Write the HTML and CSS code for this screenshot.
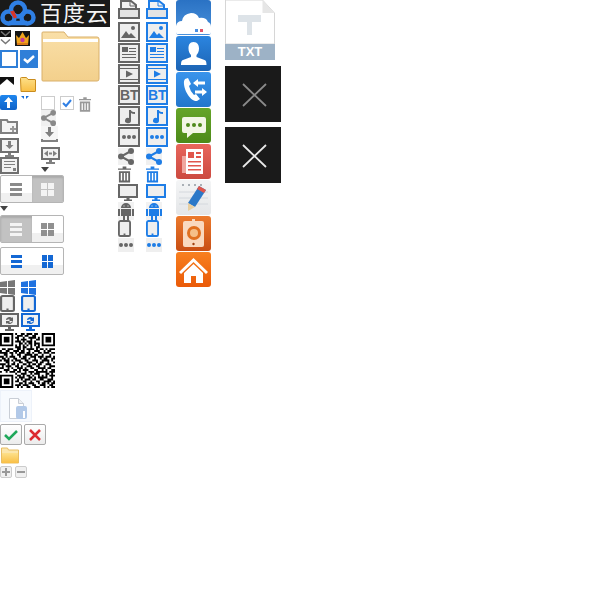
FILE: index.html
```html
<!DOCTYPE html>
<html lang="zh-CN">
<head>
    <meta charset="UTF-8">
    <title>百度云 sprite</title>
    <link rel="stylesheet" href="styles.css">
</head>
<body>
    <svg class="defs" width="0" height="0">
        <defs>
            <linearGradient id="folder-big" x1="0" y1="0" x2="0" y2="1">
                <stop offset="0" stop-color="#f9dfa8"/><stop offset="1" stop-color="#f3d08c"/>
            </linearGradient>
            <linearGradient id="folder-small" x1="0" y1="0" x2="0" y2="1">
                <stop offset="0" stop-color="#fde08a"/><stop offset="1" stop-color="#f9bf45"/>
            </linearGradient>
            <symbol id="i-page" viewBox="0 0 22 19">
                <path d="M3 9V1h10l5 4v4" fill="#f2f2f2" stroke="currentColor" stroke-width="2"/>
                <path d="M12 1v5h6" fill="none" stroke="currentColor"/>
                <rect x="1" y="9" width="20" height="9" fill="#e4e4e4" stroke="currentColor" stroke-width="2"/>
            </symbol>
            <symbol id="i-image" viewBox="0 0 22 20">
                <rect x="1" y="1" width="20" height="18" fill="#eee" stroke="currentColor" stroke-width="2"/>
                <path d="M3 16l5-7 3 4 2-2 5 5z" fill="currentColor"/>
                <circle cx="15" cy="6" r="2" fill="currentColor"/>
            </symbol>
            <symbol id="i-doc" viewBox="0 0 22 20">
                <rect x="1" y="1" width="20" height="18" fill="#eee" stroke="currentColor" stroke-width="2"/>
                <path d="M4 4h6v5H4zM11 5h7v1h-7zM11 8h7v1h-7zM4 11h14v1H4zM4 14h14v1H4z" fill="currentColor"/>
            </symbol>
            <symbol id="i-film" viewBox="0 0 22 20">
                <rect x="1" y="1" width="20" height="18" fill="#eee" stroke="currentColor" stroke-width="2"/>
                <path d="M1 4h20v1H1zM1 15h20v1H1zM8 6.500v7l7-3.500z" fill="currentColor"/>
                <path d="M4 2.500h14M4 17.500h14" stroke="#eee" stroke-dasharray="2 2"/>
            </symbol>
            <symbol id="i-note" viewBox="0 0 22 20">
                <rect x="1" y="1" width="20" height="18" fill="#eee" stroke="currentColor" stroke-width="2"/>
                <path d="M11 4h2v10.500a3 2.600 0 1 1-2-2.400zM13 4q0 2 4 2v2q-3 0-4-1z" fill="currentColor"/>
            </symbol>
            <symbol id="i-more" viewBox="0 0 22 20">
                <rect x="1" y="1" width="20" height="18" fill="#eee" stroke="currentColor" stroke-width="2"/>
                <circle cx="6" cy="10" r="2" fill="currentColor"/>
                <circle cx="11" cy="10" r="2" fill="currentColor"/>
                <circle cx="16" cy="10" r="2" fill="currentColor"/>
            </symbol>
            <symbol id="i-share" viewBox="0 0 16 17">
                <rect width="16" height="17" fill="#f0f0f0"/>
                <path d="M13 3L3 8.500 13 14" fill="none" stroke="currentColor" stroke-width="2"/>
                <circle cx="13" cy="3" r="3" fill="currentColor"/>
                <circle cx="3" cy="8.500" r="3" fill="currentColor"/>
                <circle cx="13" cy="14" r="3" fill="currentColor"/>
            </symbol>
            <symbol id="i-trash" viewBox="0 0 14 17">
                <path d="M0 2h5V0h4v2h5v1.500H0zM1 5h12v12H1zM3 7v8h1.500V7zM6.300 7v8h1.500V7zM9.500 7v8H11V7z" fill="currentColor" fill-rule="evenodd"/>
            </symbol>
            <symbol id="i-monitor" viewBox="0 0 20 18">
                <rect x="1" y="1" width="18" height="12" fill="#eee" stroke="currentColor" stroke-width="2"/>
                <path d="M8.500 14h3v1.500H14V17H6v-1.500h2.500z" fill="currentColor"/>
            </symbol>
            <symbol id="i-android" viewBox="0 0 16 18">
                <rect width="16" height="18" fill="#f2f2f2"/>
                <path d="M3 6a5 5 0 0 1 10 0zM3 7h10v7h-2v4H9v-4H7v4H5v-4H3zM0 7h2v7H0zM14 7h2v7h-2z" fill="currentColor"/>
                <path d="M5.500 3.500h1v1h-1zM9.500 3.500h1v1h-1z" fill="#eee"/>
            </symbol>
            <symbol id="i-tablet" viewBox="0 0 14 17" preserveAspectRatio="none">
                <rect x="1" y="1" width="12" height="15" rx="1.500" fill="#eee" stroke="currentColor" stroke-width="2"/>
                <rect x="6" y="13.500" width="2" height="1.500" fill="currentColor"/>
            </symbol>
            <symbol id="i-dots" viewBox="0 0 16 14">
                <rect width="16" height="14" fill="#efefef"/>
                <circle cx="3" cy="7" r="2" fill="currentColor"/>
                <circle cx="8" cy="7" r="2" fill="currentColor"/>
                <circle cx="13" cy="7" r="2" fill="currentColor"/>
            </symbol>
            <symbol id="i-sync" viewBox="0 0 19 18">
                <rect x="1" y="1" width="17" height="12" fill="#f2f2f2" stroke="currentColor" stroke-width="2"/>
                <path d="M6 7a3.500 3 0 0 1 6-2l1-1v4h-4l1-1a2 2 0 0 0-3 0zM13 8a3.500 3 0 0 1-6 2l-1 1V8h4l-1 1a2 2 0 0 0 3-.500z" fill="currentColor"/>
                <path d="M8 14h3v2h3v2H5v-2h3z" fill="currentColor"/>
            </symbol>
        </defs>
    </svg>

    <div class="sheet">
        <!-- 左列 -->
        <div class="sprite logo">
            <svg width="36" height="27" viewBox="0 0 36 27">
                <g fill="none" stroke="#2f7fe4" stroke-width="4.500">
                    <circle cx="8.500" cy="17.500" r="6"/>
                    <circle cx="27.500" cy="17.500" r="6"/>
                    <circle cx="18" cy="9.500" r="7"/>
                    <path d="M9 23h18"/>
                </g>
                <path d="M10 11.500l4-1 3 7-3 1z" fill="#d8362a"/>
            </svg>
            <span class="logo-text">百度云</span>
        </div>

        <div class="sprite chevrons">
            <svg width="11" height="15" viewBox="0 0 11 15">
                <path d="M0 0h11v7H0z" fill="#111"/>
                <path d="M1 1.500l4.500 4 4.500-4" fill="none" stroke="#777" stroke-width="1.500"/>
                <path d="M1 9.500l4.500 4 4.500-4" fill="none" stroke="#777" stroke-width="1.500"/>
            </svg>
        </div>
        <div class="sprite crown">
            <svg width="15" height="15" viewBox="0 0 15 15">
                <path d="M0 0h15v15H0z" fill="#151515"/>
                <path d="M1 4l3 3 3.500-6L11 7l3-3-1 10H2z" fill="#f0a41c"/>
                <path d="M2 12h11v2H2z" fill="#d9791a"/>
                <circle cx="7.500" cy="9" r="2.200" fill="#c2389a"/>
            </svg>
        </div>

        <div class="sprite check-off"></div>
        <div class="sprite check-on">
            <svg width="18" height="18" viewBox="0 0 18 18"><path d="M4 9l3.500 3L14 6" fill="none" stroke="#fff" stroke-width="2.500"/></svg>
        </div>

        <div class="sprite folder-big">
            <svg width="59" height="51" viewBox="0 0 59 51">
                <path d="M1 6V2q0-1 1-1h21l4 5h29q2 0 2 2v40q0 2-2 2H2q-1 0-1-1z" fill="url(#folder-big)" stroke="#d9b06a"/>
                <path d="M2 8h55v3H2z" fill="#fff"/>
            </svg>
        </div>

        <div class="sprite tri-up">
            <svg width="14" height="8" viewBox="0 0 14 8"><path d="M0 0h14v8H0z" fill="#111"/><path d="M0 8l7-6 7 6z" fill="#fff"/></svg>
        </div>
        <div class="sprite folder-small">
            <svg width="16" height="15" viewBox="0 0 16 15">
                <path d="M.5 1.500q0-1 1-1h5l1.500 2h7q.5 0 .5.500v11q0 .500-.5.500h-14z" fill="url(#folder-small)" stroke="#c98c1e"/>
            </svg>
        </div>

        <div class="sprite upload">
            <svg width="17" height="15" viewBox="0 0 17 15"><path d="M8.500 2L13 7h-3v6H7V7H4z" fill="#fff"/></svg>
        </div>
        <div class="sprite mini-chevrons">
            <svg width="8" height="5" viewBox="0 0 8 5"><path d="M0 0h3v3zM8 0H5v3z" fill="#1a6fd8"/></svg>
        </div>

        <div class="sprite box-off"></div>
        <div class="sprite box-on">
            <svg width="14" height="14" viewBox="0 0 14 14"><path d="M3 7l3 3 5-6" fill="none" stroke="#2f7fe4" stroke-width="2"/></svg>
        </div>
        <svg class="sprite big-trash"><use href="#i-trash"/></svg>
        <svg class="sprite big-share"><use href="#i-share"/></svg>

        <div class="sprite tool-download">
            <svg width="17" height="16" viewBox="0 0 17 16"><path d="M0 0h17v16H0z" fill="#f6f6f6"/><path d="M7 1h3v5h3l-4.500 5L4 6h3zM0 13h2v1h13v-1h2v3H0z" fill="#808080"/></svg>
        </div>
        <div class="sprite tool-arrows">
            <svg width="19" height="17" viewBox="0 0 19 17">
                <rect x="1" y="1" width="17" height="11" fill="#f2f2f2" stroke="#707070" stroke-width="2"/>
                <path d="M3 6.500L7 3.500v6zM16 6.500L12 3.500v6zM8 5.500h3v2H8z" fill="#808080"/>
                <path d="M8 13h3v2h3v2H5v-2h3z" fill="#808080"/>
            </svg>
        </div>
        <div class="sprite tool-tri"></div>

        <div class="sprite tool-folder-add">
            <svg width="18" height="16" viewBox="0 0 18 16">
                <path d="M1 15V2h6l1 2h9v11z" fill="#f4f4f4" stroke="#808080" stroke-width="2"/>
                <path d="M12 8h2v2h2v2h-2v2h-2v-2h-2v-2h2z" fill="#999"/>
            </svg>
        </div>
        <div class="sprite tool-save">
            <svg width="19" height="19" viewBox="0 0 19 19">
                <rect x="1" y="1" width="17" height="13" fill="#f2f2f2" stroke="#707070" stroke-width="2"/>
                <path d="M8 3h3v4h2.500l-4 4-4-4H8zM8 15h3v2h3v2H5v-2h3z" fill="#808080"/>
            </svg>
        </div>
        <div class="sprite tool-note">
            <svg width="19" height="17" viewBox="0 0 19 17">
                <rect x="1" y="1" width="17" height="15" fill="#f2f2f2" stroke="#707070" stroke-width="2"/>
                <path d="M4 4h11v1H4zM4 7h11v1H4zM4 10h7v1H4zM13 11h3v3h-3z" fill="#808080"/>
            </svg>
        </div>

        <div class="sprite toggle toggle-right">
            <span class="seg">
                <svg width="14" height="13" viewBox="0 0 14 13"><path d="M0 0h12v3H0zM0 5h12v3H0zM0 10h12v3H0z" fill="#8a8a8a"/></svg>
            </span>
            <span class="seg seg-on">
                <svg width="14" height="13" viewBox="0 0 14 13"><path d="M0 0h6v6H0zM7 0h6v6H7zM0 7h6v6H0zM7 7h6v6H7z" fill="#f4f4f4"/></svg>
            </span>
        </div>
        <div class="sprite tri-a"></div>
        <div class="sprite toggle toggle-left">
            <span class="seg seg-on">
                <svg width="14" height="13" viewBox="0 0 14 13"><path d="M0 0h12v3H0zM0 5h12v3H0zM0 10h12v3H0z" fill="#f4f4f4"/></svg>
            </span>
            <span class="seg">
                <svg width="14" height="13" viewBox="0 0 14 13"><path d="M0 0h6v6H0zM7 0h6v6H7zM0 7h6v6H0zM7 7h6v6H7z" fill="#909090"/></svg>
            </span>
        </div>
        <div class="sprite toggle toggle-blue">
            <span class="seg">
                <svg width="14" height="13" viewBox="0 0 14 13"><path d="M1 0h11v3H1zM1 5h11v3H1zM1 10h11v3H1z" fill="#1468d4"/></svg>
            </span>
            <span class="seg">
                <svg width="14" height="13" viewBox="0 0 14 13"><path d="M1 0h5v6H1zM7 0h5v6H7zM1 7h5v6H1zM7 7h5v6H7z" fill="#1468d4"/></svg>
            </span>
        </div>

        <div class="sprite win win-gray">
            <svg width="15" height="15" viewBox="0 0 15 15"><path d="M0 2l7-1v6H0zM8 1l7-1v7H8zM0 8h7v6l-7-1zM8 8h7v7l-7-1z" fill="currentColor"/></svg>
        </div>
        <div class="sprite win win-blue">
            <svg width="15" height="15" viewBox="0 0 15 15"><path d="M0 2l7-1v6H0zM8 1l7-1v7H8zM0 8h7v6l-7-1zM8 8h7v7l-7-1z" fill="currentColor"/></svg>
        </div>
        <svg class="sprite tab-gray"><use href="#i-tablet"/></svg>
        <svg class="sprite tab-blue"><use href="#i-tablet"/></svg>
        <svg class="sprite sync-gray"><use href="#i-sync"/></svg>
        <svg class="sprite sync-blue"><use href="#i-sync"/></svg>

        <div class="sprite qr">
            <svg width="55" height="55" viewBox="0 0 29 29">
                <path fill="none" stroke="#000" d="M0 .5h7M8 .5h1M11 .5h2M14 .5h3M18 .5h2M22 .5h7
                    M0 1.500h1M6 1.500h1M9 1.500h3M13 1.500h2M17 1.500h2M22 1.500h1M28 1.500h1
                    M0 2.500h1M2 2.500h3M6 2.500h1M8 2.500h2M12 2.500h1M15 2.500h4M20 2.500h1M22 2.500h1M24 2.500h3M28 2.500h1
                    M0 3.500h1M2 3.500h3M6 3.500h1M9 3.500h1M11 3.500h3M16 3.500h1M19 3.500h2M22 3.500h1M24 3.500h3M28 3.500h1
                    M0 4.500h1M2 4.500h3M6 4.500h1M8 4.500h3M12 4.500h1M14 4.500h3M18 4.500h1M22 4.500h1M24 4.500h3M28 4.500h1
                    M0 5.500h1M6 5.500h1M10 5.500h2M13 5.500h1M15 5.500h2M18 5.500h3M22 5.500h1M28 5.500h1
                    M0 6.500h7M8 6.500h1M10 6.500h1M12 6.500h1M14 6.500h1M16 6.500h1M18 6.500h1M20 6.500h1M22 6.500h7
                    M8 7.500h3M12 7.500h2M16 7.500h1M19 7.500h2
                    M1 8.500h2M4 8.500h3M9 8.500h2M12 8.500h1M14 8.500h4M19 8.500h1M21 8.500h2M24 8.500h1M26 8.500h3
                    M0 9.500h1M3 9.500h2M7 9.500h3M11 9.500h2M15 9.500h1M18 9.500h3M23 9.500h1M25 9.500h2
                    M0 10.500h4M5 10.500h2M8 10.500h1M10 10.500h3M14 10.500h2M17 10.500h1M20 10.500h2M23 10.500h3M27 10.500h2
                    M2 11.500h2M6 11.500h1M9 11.500h2M13 11.500h4M18 11.500h2M22 11.500h1M26 11.500h1
                    M0 12.500h2M3 12.500h1M5 12.500h3M10 12.500h1M12 12.500h2M16 12.500h3M20 12.500h3M24 12.500h3M28 12.500h1
                    M1 13.500h2M4 13.500h1M7 13.500h2M11 13.500h3M15 13.500h1M18 13.500h1M21 13.500h1M23 13.500h2M27 13.500h2
                    M0 14.500h1M2 14.500h3M6 14.500h1M8 14.500h3M13 14.500h2M17 14.500h3M22 14.500h4M27 14.500h1
                    M3 15.500h2M7 15.500h1M10 15.500h2M14 15.500h3M19 15.500h1M21 15.500h2M25 15.500h1M28 15.500h1
                    M0 16.500h3M4 16.500h1M6 16.500h2M9 16.500h1M12 16.500h2M15 16.500h1M17 16.500h2M20 16.500h2M24 16.500h3
                    M1 17.500h1M3 17.500h3M8 17.500h2M11 17.500h1M14 17.500h3M19 17.500h2M23 17.500h1M26 17.500h3
                    M0 18.500h2M4 18.500h1M6 18.500h1M9 18.500h3M13 18.500h1M16 18.500h2M20 18.500h4M25 18.500h2
                    M2 19.500h3M7 19.500h2M10 19.500h1M12 19.500h3M18 19.500h2M22 19.500h1M24 19.500h1M27 19.500h2
                    M0 20.500h1M3 20.500h1M5 20.500h3M9 20.500h2M13 20.500h1M15 20.500h3M19 20.500h6M26 20.500h3
                    M8 21.500h1M11 21.500h3M16 21.500h1M18 21.500h2M20 21.500h1M24 21.500h2M27 21.500h1
                    M0 22.500h7M9 22.500h2M12 22.500h1M14 22.500h2M17 22.500h1M20 22.500h1M22 22.500h1M24 22.500h1M26 22.500h3
                    M0 23.500h1M6 23.500h1M8 23.500h1M10 23.500h3M15 23.500h2M18 23.500h1M20 23.500h5M27 23.500h1
                    M0 24.500h1M2 24.500h3M6 24.500h1M9 24.500h1M11 24.500h1M13 24.500h3M17 24.500h2M21 24.500h2M25 24.500h3
                    M0 25.500h1M2 25.500h3M6 25.500h1M8 25.500h2M12 25.500h2M16 25.500h1M19 25.500h2M23 25.500h4M28 25.500h1
                    M0 26.500h1M2 26.500h3M6 26.500h1M10 26.500h2M13 26.500h1M15 26.500h3M20 26.500h1M22 26.500h2M25 26.500h1M27 26.500h2
                    M0 27.500h1M6 27.500h1M8 27.500h3M12 27.500h3M17 27.500h2M21 27.500h3M26 27.500h2
                    M0 28.500h7M9 28.500h1M11 28.500h1M14 28.500h2M18 28.500h3M23 28.500h1M25 28.500h1M27 28.500h2"/>
            </svg>
        </div>

        <div class="sprite file-tile">
            <svg width="32" height="32" viewBox="0 0 32 32">
                <path d="M9.500 8.500h9l5 5v15h-14z" fill="#fff" stroke="#c9ced6"/>
                <path d="M18.500 8.500v5h5" fill="#eef0f3" stroke="#c9ced6"/>
                <rect x="16" y="16" width="11" height="13" rx="2" fill="#b2c9e8"/>
                <path d="M23 21h2v7h-2z" fill="#fff"/>
            </svg>
        </div>

        <div class="sprite mini-btn btn-ok">
            <svg width="14" height="12" viewBox="0 0 14 12"><path d="M1 6l4 4 8-8" fill="none" stroke="#1fa85a" stroke-width="2.500"/></svg>
        </div>
        <div class="sprite mini-btn btn-no">
            <svg width="12" height="12" viewBox="0 0 12 12"><path d="M1 1l10 10M11 1L1 11" fill="none" stroke="#dc2a30" stroke-width="2.500"/></svg>
        </div>

        <div class="sprite folder-open">
            <svg width="18" height="17" viewBox="0 0 18 17">
                <path d="M.5 3V1h6l1 2h10v13H.5z" fill="#fbe6ac" stroke="#e8bd63"/>
                <path d="M1 6h16v10H1z" fill="url(#folder-small)"/>
            </svg>
        </div>
        <div class="sprite round-btn btn-plus">
            <svg width="8" height="8" viewBox="0 0 8 8"><path d="M3 0h2v3h3v2H5v3H3V5H0V3h3z" fill="#999"/></svg>
        </div>
        <div class="sprite round-btn btn-minus">
            <svg width="8" height="2" viewBox="0 0 8 2"><path d="M0 0h8v2H0z" fill="#999"/></svg>
        </div>

        <!-- 第二列 灰色 -->
        <div class="icon-col col-gray">
            <svg class="ic ic-page"><use href="#i-page"/></svg>
            <svg class="ic ic-box"><use href="#i-image"/></svg>
            <svg class="ic ic-box"><use href="#i-doc"/></svg>
            <svg class="ic ic-box"><use href="#i-film"/></svg>
            <span class="ic-bt">BT</span>
            <svg class="ic ic-box"><use href="#i-note"/></svg>
            <svg class="ic ic-box"><use href="#i-more"/></svg>
            <svg class="ic ic-share"><use href="#i-share"/></svg>
            <svg class="ic ic-trash"><use href="#i-trash"/></svg>
            <svg class="ic ic-monitor"><use href="#i-monitor"/></svg>
            <svg class="ic ic-android"><use href="#i-android"/></svg>
            <svg class="ic ic-tablet"><use href="#i-tablet"/></svg>
            <svg class="ic ic-dots"><use href="#i-dots"/></svg>
        </div>
        <!-- 第二列 蓝色 -->
        <div class="icon-col col-blue">
            <svg class="ic ic-page"><use href="#i-page"/></svg>
            <svg class="ic ic-box"><use href="#i-image"/></svg>
            <svg class="ic ic-box"><use href="#i-doc"/></svg>
            <svg class="ic ic-box"><use href="#i-film"/></svg>
            <span class="ic-bt">BT</span>
            <svg class="ic ic-box"><use href="#i-note"/></svg>
            <svg class="ic ic-box"><use href="#i-more"/></svg>
            <svg class="ic ic-share"><use href="#i-share"/></svg>
            <svg class="ic ic-trash"><use href="#i-trash"/></svg>
            <svg class="ic ic-monitor"><use href="#i-monitor"/></svg>
            <svg class="ic ic-android"><use href="#i-android"/></svg>
            <svg class="ic ic-tablet"><use href="#i-tablet"/></svg>
            <svg class="ic ic-dots"><use href="#i-dots"/></svg>
        </div>

        <!-- 应用图标 -->
        <div class="app-col">
            <div class="app app-cloud">
                <svg width="35" height="35" viewBox="0 0 35 35">
                    <path d="M0 34V26q1-5 6-5 1-7 9-8 6 0 8 5 7-1 9 4 3 1 3 5v7z" fill="#fff"/>
                    <path d="M19 29h3v3h-3z" fill="#4a90e2"/>
                    <path d="M24 29h3v3h-3z" fill="#e0566a"/>
                </svg>
            </div>
            <div class="app app-contact">
                <svg width="35" height="35" viewBox="0 0 35 35">
                    <path d="M17.500 6c4 0 5.500 3 5.500 6.500 0 3-1 5-2.500 6.500v2l8 3c1.500.5 2 2 2 5H5c0-3 .5-4.500 2-5l8-3v-2c-1.500-1.500-2.500-3.500-2.500-6.500C12.500 9 13.500 6 17.500 6z" fill="#fff"/>
                </svg>
            </div>
            <div class="app app-phone">
                <svg width="35" height="35" viewBox="0 0 35 35">
                    <path d="M9 7l3-1 3 6-2 2q1 5 5 9l2-1 4 5-3 2c-6 1-14-11-13-20z" fill="#fff"/>
                    <path d="M17 11l5-4v2.500h7v3h-7V15zM31 20l-5-4v2.500h-7v3h7V24z" fill="#fff"/>
                </svg>
            </div>
            <div class="app app-chat">
                <svg width="35" height="35" viewBox="0 0 35 35">
                    <path d="M8 9h20q2 0 2 2v12q0 2-2 2H17l-6 5v-5H8q-2 0-2-2V11q0-2 2-2z" fill="#f2f6e6"/>
                    <circle cx="12" cy="17" r="2" fill="#4f8a1c"/>
                    <circle cx="18" cy="17" r="2" fill="#4f8a1c"/>
                    <circle cx="24" cy="17" r="2" fill="#4f8a1c"/>
                </svg>
            </div>
            <div class="app app-news">
                <svg width="35" height="35" viewBox="0 0 35 35">
                    <path d="M6 12h4v17H6z" fill="#f0a79f"/>
                    <path d="M10 5h17v25H10z" fill="#fff"/>
                    <path d="M12 8h6v6h-6zM20 8h5v2h-5zM20 12h5v2h-5zM12 17h13v1.500H12zM12 21h13v1.500H12zM12 25h13v1.500H12z" fill="#e0564c"/>
                </svg>
            </div>
            <div class="app app-pencil">
                <svg width="35" height="35" viewBox="0 0 35 35">
                    <path d="M3 12h29M3 18h29M3 24h29" stroke="#d4d8dd"/>
                    <path d="M6 5h24" stroke="#aab0b6" stroke-width="2" stroke-dasharray="2 4"/>
                    <path d="M23 6l7 4-11 17-7-4z" fill="#2b78c8"/>
                    <path d="M23 6l7 4-2 3-7-4z" fill="#e0564c"/>
                    <path d="M12 23l7 4-7 4z" fill="#e9cfa0"/>
                </svg>
            </div>
            <div class="app app-tablet">
                <svg width="35" height="35" viewBox="0 0 35 35">
                    <rect x="7" y="5" width="21" height="26" rx="2" fill="#f9d9bf"/>
                    <rect x="16" y="3" width="3" height="3" fill="#f9d9bf"/>
                    <circle cx="18" cy="17" r="7" fill="#e0701f"/>
                    <circle cx="18" cy="17" r="4" fill="#f5bf87"/>
                    <circle cx="17.500" cy="28" r="1.200" fill="#a04010"/>
                </svg>
            </div>
            <div class="app app-home">
                <svg width="35" height="35" viewBox="0 0 35 35">
                    <path d="M17.500 6L32 20l-2 2-12.500-12L5 22l-2-2z" fill="#fff"/>
                    <path d="M8 21l9.500-9 9.500 9v10h-7v-7h-5v7H8z" fill="#fff"/>
                </svg>
            </div>
        </div>

        <!-- 右列 -->
        <div class="txt-file">
            <svg class="txt-page" width="50" height="44" viewBox="0 0 50 44">
                <path d="M.5 0h37l12 13v31H.5z" fill="#fff" stroke="#d6d6d6"/>
                <path d="M37.500 0v13h12z" fill="#e6e6e6"/>
                <path d="M13 15h23v7h-9v13h-5V22h-9z" fill="#dde3e8"/>
            </svg>
            <span class="txt-label">TXT</span>
        </div>
        <div class="close-tile close-dim">
            <svg width="56" height="56" viewBox="0 0 56 56"><path d="M18 18l23 22M41 18L18 40" stroke="#8a8a8a" stroke-width="1.800"/></svg>
        </div>
        <div class="close-tile close-bright">
            <svg width="56" height="56" viewBox="0 0 56 56"><path d="M18 18l23 22M41 18L18 40" stroke="#e8e8e8" stroke-width="1.800"/></svg>
        </div>
    </div>
</body>
</html>
```

FILE: styles.css
```css
/* 雪碧图画布 */
body {
    margin: 0;
    background: #fff;
}

.defs {
    position: absolute;
}

.sheet {
    position: relative;
    width: 600px;
    height: 600px;
    overflow: hidden;
    font-family: "Liberation Sans", "Noto Sans CJK SC", sans-serif;
}

.sheet svg {
    display: block;
}

.sprite {
    position: absolute;
}

/* logo */
.logo {
    left: 0;
    top: 0;
    width: 110px;
    height: 27px;
    background: #1a1a1a;
    display: flex;
    align-items: center;
    gap: 4px;
}

.logo-text {
    color: #f4f4f4;
    font-size: 22px;
    line-height: 27px;
    letter-spacing: 1px;
    white-space: nowrap;
}

.chevrons { left: 0; top: 30px; width: 11px; height: 15px; }
.crown { left: 15px; top: 31px; width: 15px; height: 15px; }

/* 复选框 */
.check-off {
    left: 0;
    top: 50px;
    width: 18px;
    height: 18px;
    box-sizing: border-box;
    border: 2px solid #2f7fd8;
    background: #fff;
}

.check-on {
    left: 20px;
    top: 50px;
    width: 18px;
    height: 18px;
    background: #2f7fd8;
}

.folder-big { left: 41px; top: 31px; width: 59px; height: 51px; }
.tri-up { left: 0; top: 77px; width: 14px; height: 8px; }
.folder-small { left: 20px; top: 77px; width: 16px; height: 15px; }

.upload {
    left: 0;
    top: 95px;
    width: 17px;
    height: 15px;
    background: linear-gradient(#1e86ee, #0f62c8);
    border-radius: 2px;
}

.mini-chevrons { left: 21px; top: 96px; width: 8px; height: 5px; }

.box-off,
.box-on {
    top: 96px;
    width: 14px;
    height: 14px;
    box-sizing: border-box;
    border: 1px solid #ccc;
}

.box-off { left: 41px; }
.box-on { left: 60px; }
.box-on svg { margin: -1px; }

.big-trash { left: 79px; top: 96px; width: 12px; height: 17px; color: #999; }
.big-share { left: 41px; top: 110px; width: 15px; height: 16px; color: #8a8a8a; }

.tool-download { left: 41px; top: 126px; width: 17px; height: 16px; }
.tool-arrows { left: 41px; top: 147px; width: 19px; height: 17px; }
.tool-tri,
.tri-a {
    width: 0;
    height: 0;
    border-left: 4.5px solid transparent;
    border-right: 4.5px solid transparent;
    border-top: 5px solid #444;
}
.tool-tri { left: 41px; top: 167px; }
.tri-a { left: 0; top: 206px; }

.tool-folder-add { left: 0; top: 118px; width: 18px; height: 16px; }
.tool-save { left: 0; top: 138px; width: 19px; height: 19px; }
.tool-note { left: 0; top: 157px; width: 19px; height: 17px; }

/* 视图切换 */
.toggle {
    left: 0;
    width: 64px;
    height: 28px;
    box-sizing: border-box;
    border: 1px solid #b5b5b5;
    border-radius: 2px;
    overflow: hidden;
    display: flex;
    background: linear-gradient(#fff 65%, #f0f0f0 65%);
}

.toggle-right { top: 175px; }
.toggle-left { top: 215px; }
.toggle-blue { top: 247px; }

.seg {
    flex: 1;
    display: flex;
    align-items: center;
    justify-content: center;
}

.seg-on {
    background: #c2c2c2;
    box-shadow: inset 0 2px 2px #aaa;
}

.win { top: 280px; width: 15px; height: 15px; }
.win-gray { left: 0; color: #777; }
.win-blue { left: 21px; color: #1f72e0; }

.tab-gray,
.tab-blue { top: 295px; width: 15px; height: 17px; }
.tab-gray { left: 0; color: #666; }
.tab-blue { left: 21px; color: #1468d4; }

.sync-gray,
.sync-blue { top: 313px; width: 19px; height: 18px; }
.sync-gray { left: 0; color: #666; }
.sync-blue { left: 21px; color: #1468d4; }

.qr { left: 0; top: 333px; width: 55px; height: 55px; }

.file-tile {
    left: 0;
    top: 390px;
    width: 32px;
    height: 32px;
    background: #f7fafe;
    box-shadow: inset 0 0 0 1px #edf2fa;
}

/* 小按钮 */
.mini-btn {
    top: 424px;
    width: 22px;
    height: 21px;
    box-sizing: border-box;
    border: 1px solid #aaa;
    border-radius: 2px;
    background: linear-gradient(#fff, #ececec);
    display: flex;
    align-items: center;
    justify-content: center;
}

.btn-ok { left: 0; }
.btn-no { left: 24px; }

.folder-open { left: 1px; top: 447px; width: 18px; height: 17px; }

.round-btn {
    top: 466px;
    width: 12px;
    height: 12px;
    box-sizing: border-box;
    border: 1px solid #ccc;
    border-radius: 2px;
    background: #f0f0f0;
    display: flex;
    align-items: center;
    justify-content: center;
}

.btn-plus { left: 0; }
.btn-minus { left: 15px; }

/* 灰蓝两列图标 */
.icon-col {
    position: absolute;
    top: 0;
    width: 22px;
    display: flex;
    flex-direction: column;
    align-items: flex-start;
}

.col-gray { left: 118px; color: #666; }
.col-blue { left: 146px; color: #1e7de6; }

.ic { flex: none; }
.ic-page { width: 22px; height: 19px; margin-bottom: 3px; }
.ic-box { width: 22px; height: 20px; margin-bottom: 1px; }
.ic-share { width: 16px; height: 17px; margin-bottom: 1px; }
.ic-trash { width: 13px; height: 17px; margin-bottom: 1px; }
.ic-monitor { width: 20px; height: 18px; }
.ic-android { width: 16px; height: 18px; }
.ic-tablet { width: 13px; height: 17px; margin-bottom: 1px; }
.ic-dots { width: 16px; height: 14px; }

.ic-bt {
    box-sizing: border-box;
    width: 22px;
    height: 20px;
    margin-bottom: 1px;
    border: 2px solid;
    background: #eee;
    font-size: 14px;
    font-weight: bold;
    line-height: 16px;
    text-align: center;
}

/* 应用图标 */
.app-col {
    position: absolute;
    left: 176px;
    top: 0;
    display: flex;
    flex-direction: column;
    gap: 1px;
}

.app {
    width: 35px;
    height: 35px;
    border-radius: 3px;
    overflow: hidden;
}

.app-cloud { background: linear-gradient(#2a72c4, #4a92dc); }
.app-contact { background: linear-gradient(#2b85e0, #1c64b4); }
.app-phone { background: linear-gradient(#3a94ec, #2276cc); }
.app-chat { background: linear-gradient(#66a52a, #4c8a18); }
.app-news { background: linear-gradient(#e8665c, #cc4a40); }
.app-pencil { background: linear-gradient(#f4f5f6, #e4e6e8); }
.app-tablet { background: linear-gradient(#ec7a2c, #c84e14); }
.app-home { background: linear-gradient(#f88020, #ea5a08); }

/* 文件与关闭 */
.txt-file {
    position: absolute;
    left: 225px;
    top: 0;
    width: 50px;
    height: 60px;
    display: flex;
    flex-direction: column;
}

.txt-label {
    height: 16px;
    background: #9db2c6;
    color: #fff;
    font-size: 13px;
    font-weight: bold;
    line-height: 16px;
    text-align: center;
}

.close-tile {
    position: absolute;
    left: 225px;
    width: 56px;
    height: 56px;
    background: #1a1a1a;
}

.close-dim { top: 66px; }
.close-bright { top: 127px; }
```
